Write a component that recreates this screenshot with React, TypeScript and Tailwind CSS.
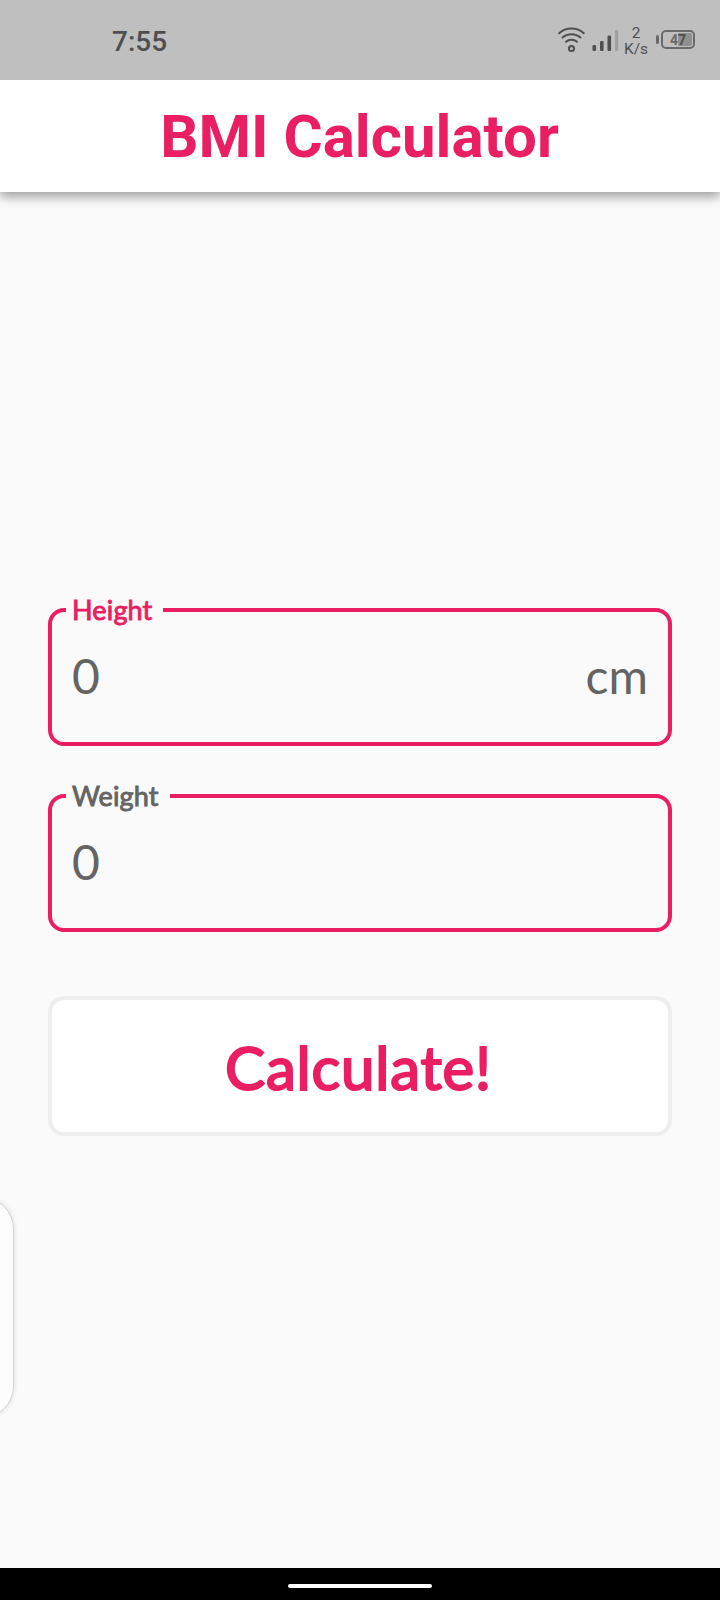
import React from "react";

function StatusBar() {
  return (
    <div className="flex h-20 shrink-0 items-start bg-[#bfbfbf] font-[Roboto,sans-serif] text-[#4f4f4f]">
      <div className="ml-28 mt-[26px] text-[28px] font-medium leading-8">7:55</div>
      <svg className="ml-auto mt-[26px] h-7 w-[27px] shrink-0" viewBox="0 0 27 28" fill="none" stroke="#4f4f4f" strokeWidth="2" strokeLinecap="round">
        <path d="M1.2 7.2C8 1 19 1 25.8 7.2" />
        <path d="M4.5 11.5C9.5 7 17.5 7 22.5 11.5" />
        <path d="M8 15.8C11 13 16 13 19 15.8" />
        <circle cx="13.5" cy="22.5" r="2.6" />
      </svg>
      <svg className="ml-[7px] mt-[30px] h-[22px] w-[27px] shrink-0" viewBox="0 0 27 22">
        <rect x="0.5" y="15" width="3.6" height="6" rx="1.3" fill="#4f4f4f" />
        <rect x="8" y="11" width="3.6" height="10" rx="1.3" fill="#4f4f4f" />
        <rect x="15.5" y="5.5" width="3.6" height="15.5" rx="1.3" fill="#4f4f4f" />
        <rect x="23" y="0" width="3.2" height="21" rx="1.3" fill="#a0a0a0" />
      </svg>
      <div className="ml-[5px] mt-[25px] w-6 text-center text-[15.5px] leading-4">
        <div>2</div>
        <div>K/s</div>
      </div>
      <div className="ml-2 mr-[25px] mt-[30px] flex h-[19px] items-center gap-[2px]">
        <div className="h-[9px] w-[3px] rounded-sm bg-[#6a6a6a]" />
        <div className="flex h-[19px] w-[34px] items-center rounded-[5px] border-2 border-[#6a6a6a] bg-[linear-gradient(90deg,#bfbfbf_50%,#8f8f8f_50%)] bg-clip-content p-px pl-[2px]">
          <div className="w-full pr-px text-center text-[14px] font-bold leading-none">
            <span className="text-[#6a6a6a]">4</span>
            <span>7</span>
          </div>
        </div>
      </div>
    </div>
  );
}

interface FieldProps {
  label: string;
  suffix?: string;
  labelClass: string;
}

function Field({ label, suffix, labelClass }: FieldProps) {
  return (
    <div className="relative flex h-[138px] items-center justify-between rounded-[16px] border-4 border-[#e91e63] px-5 pb-[2px] text-[48px] leading-[58px] text-[#646464]">
      <span className={"absolute -top-[18px] left-[14px] h-8 bg-[#fafafa] pl-[6px] text-[27px] font-normal leading-8 tracking-[0.15px] [-webkit-text-stroke:0.9px_currentColor] " + labelClass}>
        {label}
      </span>
      <span>0</span>
      {suffix && <span>{suffix}</span>}
    </div>
  );
}

export default function App() {
  return (
    <div className="relative flex h-[1600px] w-[720px] flex-col overflow-hidden bg-[#fafafa] font-[Lato,sans-serif]">
      <StatusBar />
      <header className="flex h-28 shrink-0 items-center justify-center bg-white pr-px pt-[2px] font-[Roboto,sans-serif] text-[60px] font-bold leading-[70px] text-[#e91e63] shadow-[0_5px_10px_rgba(0,0,0,0.36)] [clip-path:inset(0_0_-20px_0)]">
        <h1>BMI Calculator</h1>
      </header>
      <main className="flex flex-1 flex-col px-12 pt-[416px]">
        <Field label="Height" suffix="cm" labelClass="w-[97px] text-[#e91e63]" />
        <div className="h-12" />
        <Field label="Weight" labelClass="w-[104px] text-[#646464]" />
        <button className="mt-16 flex h-[140px] items-center justify-center rounded-[16px] border-4 border-[#eeeeee] bg-white pr-[3px] pt-[2px] text-[60px] font-normal leading-[72px] tracking-[0.8px] text-[#e91e63] [-webkit-text-stroke:2.1px_currentColor]">
          Calculate!
        </button>
      </main>
      <div className="absolute -left-[50px] top-[1197px] h-[221px] w-16 rounded-[32px] border border-[#d4d4d4] bg-[#fdfdfd] shadow-[0_0_5px_rgba(0,0,0,0.12)]" />
      <footer className="flex h-8 shrink-0 items-start justify-center bg-black pt-4">
        <div className="h-1 w-36 rounded-full bg-white" />
      </footer>
    </div>
  );
}
